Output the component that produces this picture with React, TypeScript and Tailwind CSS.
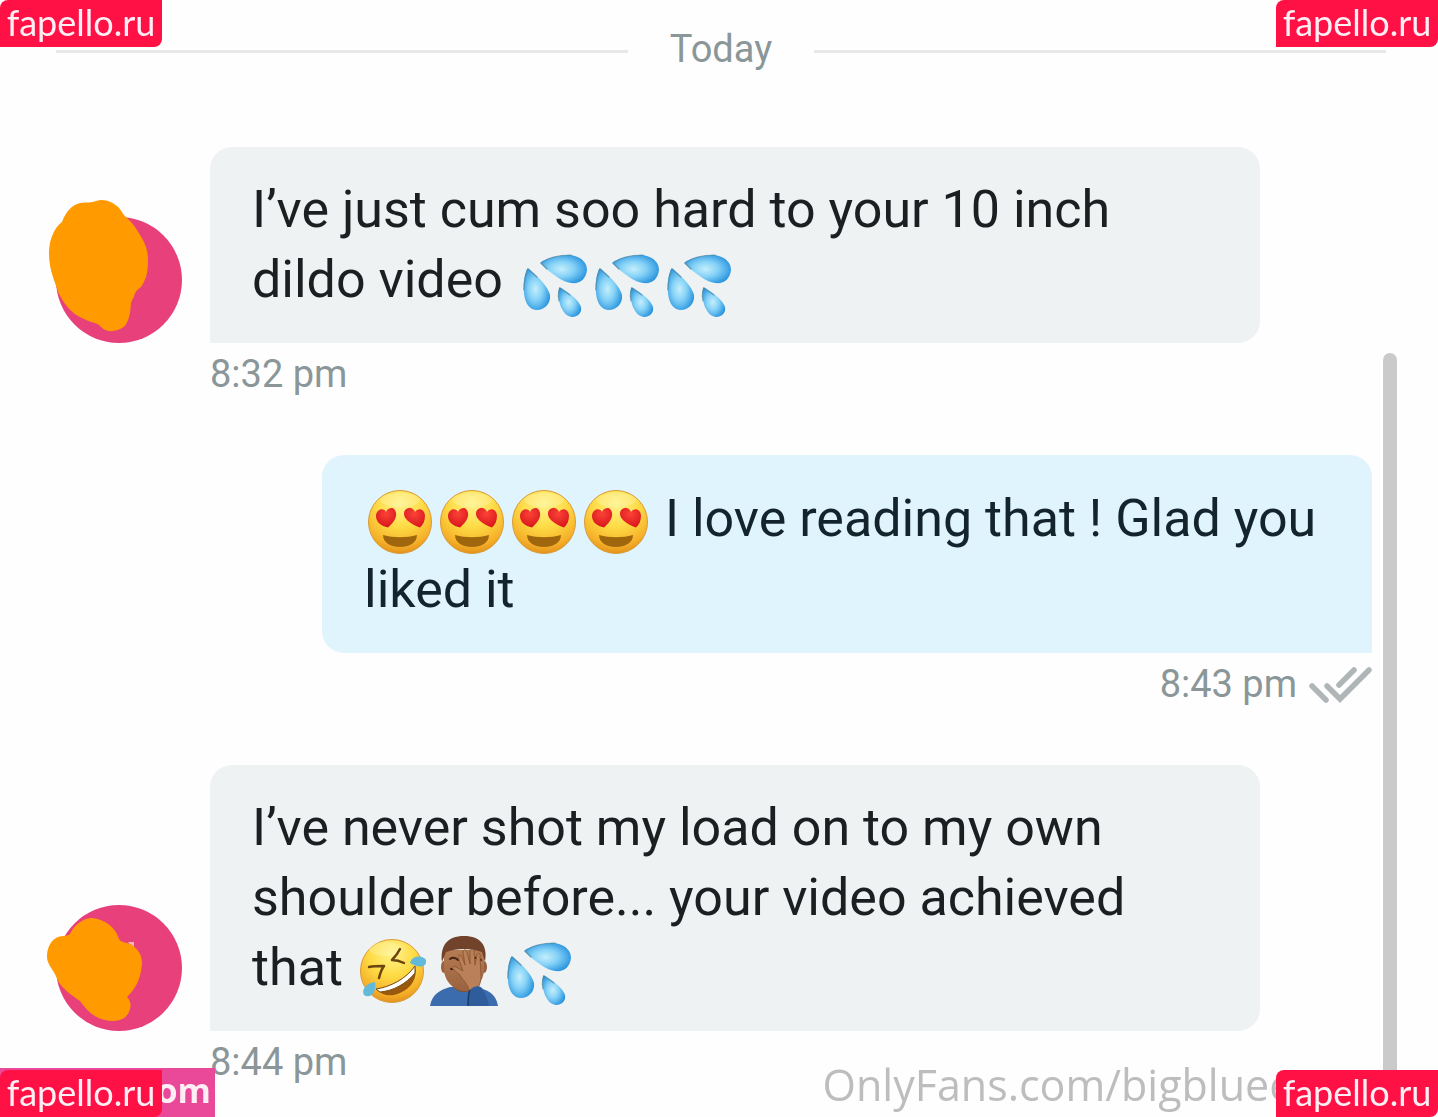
import type { ReactNode } from "react";

const emojiClass = "inline-block h-[66px] w-[72px] -my-2 align-middle overflow-visible";

function Gradients() {
  return (
    <svg className="absolute h-0 w-0" aria-hidden="true">
      <defs>
        <radialGradient id="face" cx="50%" cy="22%" r="80%">
          <stop offset="0" stopColor="#fff38c" />
          <stop offset="0.45" stopColor="#fedb45" />
          <stop offset="0.8" stopColor="#f6b22a" />
          <stop offset="1" stopColor="#e08e1a" />
        </radialGradient>
        <radialGradient id="drop" cx="45%" cy="50%" r="60%">
          <stop offset="0" stopColor="#c4eefc" />
          <stop offset="0.45" stopColor="#85d2f7" />
          <stop offset="1" stopColor="#2390dc" />
        </radialGradient>
        <radialGradient id="heart" cx="50%" cy="30%" r="70%">
          <stop offset="0" stopColor="#fb4338" />
          <stop offset="1" stopColor="#d8151c" />
        </radialGradient>
        <linearGradient id="skin" x1="0" y1="0" x2="0" y2="1">
          <stop offset="0" stopColor="#b57b52" />
          <stop offset="1" stopColor="#9a6240" />
        </linearGradient>
      </defs>
    </svg>
  );
}

function Sweat() {
  return (
    <svg viewBox="-4 -4 72 66" className={emojiClass} role="img" aria-label="sweat droplets">
      <g fill="url(#drop)">
        <path d="M21 8C29 3 42 1 51 1C62 3 67 9 67 16C66 25 60 30 51 29C42 28 31 19 21 10Q20 9 21 8Z" />
        <path d="M7 15C4 22 3 30 4 39C5 50 10 56 17 56C25 56 31 49 30 41C28 32 18 23 9 15Q8 14 7 15Z" />
        <path d="M39 34C38 41 39 50 42 55C45 61 49 63 53 63C59 62 62 58 61 53C59 46 49 39 41 34Q39 33 39 34Z" />
      </g>
      <g fill="none" stroke="#4f8baa" strokeWidth="1.2" strokeLinecap="round" opacity="0.8">
        <path d="M27 15L21 9C29 3 42 1 51 1" />
        <path d="M4 36C4 28 5 21 8 15L17 23" />
        <path d="M39 47C38 42 38 38 40 34L50 41" />
      </g>
    </svg>
  );
}

function HeartEyes() {
  return (
    <svg viewBox="0 0 72 66" className={emojiClass} role="img" aria-label="heart eyes">
      <circle cx="36" cy="33" r="31.500" fill="url(#face)" stroke="#d99a35" />
      <ellipse cx="36" cy="11" rx="20" ry="7" fill="#fff9bd" opacity="0.3" />
      <path d="M24 38.500C17 37 12 33 12 27C12 20 20 18 22 23C24 18 31 17 32 24C33 30 28 35 24 38.500Z" fill="url(#heart)" />
      <path d="M56 38.500C49 36 40 31 40 25C40 18 49 17 51 23C54 18 61 20 61 27C61 32 59 36 56 38.500Z" fill="url(#heart)" />
      <path d="M19 46C30 49 42 49 53 46C53 54 45 58 36 58C27 58 19 54 19 46Z" fill="#a0660e" />
    </svg>
  );
}

function Rofl() {
  return (
    <svg viewBox="0 0 72 66" className={emojiClass} role="img" aria-label="rolling on the floor laughing">
      <circle cx="36" cy="33" r="31.500" fill="url(#face)" stroke="#d99a35" />
      <ellipse cx="30" cy="11" rx="17" ry="7" fill="#fff9bd" opacity="0.3" />
      <g fill="none" stroke="#6b4410" strokeWidth="2.500" strokeLinecap="round" strokeLinejoin="round">
        <path d="M13 29C18 28 23 28 28 28C25 32 24 36 23 40" />
        <path d="M44 11C42 15 39 19 36 22C40 22 44 23 48 25" />
      </g>
      <path d="M20 51C34 49 50 41 59 28C62 39 56 50 44 55C35 59 26 58 20 51Z" fill="#9a580d" />
      <path d="M20 51C34 49 50 41 59 28L59 35C50 46 37 53 24 54Z" fill="#fff" stroke="#7b4b14" />
      <path d="M54 25C56 17 67 17 70 22C71 29 64 31 54 25Z" fill="#62b9d9" />
      <path d="M19 44C10 45 5 52 8 57C14 61 21 55 19 44Z" fill="#62b9d9" />
    </svg>
  );
}

function Facepalm() {
  return (
    <svg viewBox="0 0 72 66" className={emojiClass} role="img" aria-label="man facepalming">
      <path d="M2 68C4 56 12 52 22 49H46C60 51 68 56 70 68Z" fill="#3a6cae" />
      <path d="M25 42H46V50C40 56 30 55 25 49Z" fill="#82502f" />
      <ellipse cx="16" cy="29" rx="3" ry="6" fill="#986040" />
      <ellipse cx="56" cy="29" rx="3" ry="6" fill="#986040" />
      <path d="M16 12H56V31C56 44 46 53 37 53C26 53 16 43 16 31Z" fill="url(#skin)" />
      <path d="M14 24C12 8 19-2 36-2C53-2 60 8 57 24L54 14C43 10 29 10 18 14Z" fill="#70432a" />
      <path d="M22 21C25 19 28 20 30 22M46 20C49 19 51 20 53 22M23 31H29" stroke="#432312" strokeWidth="2" fill="none" strokeLinecap="round" />
      <path d="M31 22C30 17 32 15 34 19L37 27L35 14C35 11 38 11 39 14L42 26L42 13C43 10 46 11 46 14L47 27L49 17C50 14 53 15 52 19L53 38C53 43 52 46 50 50L41 54C41 46 34 42 32 37L25 31C23 29 26 28 28 29L35 33Z" fill="#b98059" stroke="#85532f" strokeWidth="0.8" />
      <path d="M40 68C40 61 40 56 42 52C45 48 51 47 54 50C58 56 60 62 61 68Z" fill="#2f5d9c" />
      <path d="M40 68C40 61 40 56 42 52" stroke="#183b69" strokeWidth="1.500" fill="none" />
    </svg>
  );
}

function Avatar({ children }: { children: ReactNode }) {
  return (
    <svg viewBox="0 0 126 126" className="h-[126px] w-[126px] shrink-0 overflow-visible" role="img" aria-label="Avatar">
      <circle cx="63" cy="63" r="63" fill="#e8407a" />
      {children}
    </svg>
  );
}

function DoubleCheck() {
  return (
    <svg viewBox="0 -2 63 38" className="h-[38px] w-[63px] overflow-visible" fill="none" stroke="#b0b6b8" strokeWidth="5.500" aria-hidden="true">
      <path d="M3 19L17 33M18 19L31 32L60 3" strokeLinecap="round" />
      <path d="M30 18L45 3" strokeLinecap="round" />
    </svg>
  );
}

function Received({ avatar, time, children }: { avatar: ReactNode; time: string; children: ReactNode }) {
  return (
    <article className="pl-14 pr-[178px]">
      <div className="flex items-end gap-7">
        {avatar}
        <p className="flex-1 rounded-[22px] rounded-bl-none bg-[#eff2f3] px-[42px] py-7 text-[#1b1f22]">{children}</p>
      </div>
      <time className="block pl-[154px] text-[38px] leading-[62px] text-[#8a9698]">{time}</time>
    </article>
  );
}

function Sent({ time, children }: { time: string; children: ReactNode }) {
  return (
    <article className="pl-[322px] pr-[66px]">
      <p className="rounded-[22px] rounded-br-none bg-[#e0f4fe] px-[42px] py-7 leading-[71px] text-[#14242c]">{children}</p>
      <div className="flex items-center justify-end gap-3 text-[38px] leading-[62px] text-[#8a9698]">
        <time>{time}</time>
        <DoubleCheck />
      </div>
    </article>
  );
}

function SiteBadge({ className }: { className: string }) {
  return (
    <span className={`fixed h-[47px] w-[162px] rounded-tl-lg rounded-br-lg bg-[#ff1045] text-center font-[Lato,sans-serif] text-[36px] leading-[44px] text-[#ffeef4] ${className}`}>
      fapello.ru
    </span>
  );
}

export default function App() {
  return (
    <div className="h-screen overflow-hidden bg-[#fefefe] font-[Roboto,sans-serif] text-[52px] leading-[70px]">
      <Gradients />
      <header className="flex items-center gap-[42px] pt-3.5 pr-[52px] pl-14">
        <span className="h-[3px] flex-1 bg-[#e8e8e8]" />
        <h1 className="pb-1 text-[38px] text-[#8a9698]">Today</h1>
        <span className="h-[3px] flex-1 bg-[#e8e8e8]" />
      </header>

      <main className="flex flex-col gap-[50px] pt-[59px]">
        <Received
          time="8:32 pm"
          avatar={
            <Avatar>
              <path
                d="M-7 36C-7 23-2 11 6 5C10-6 16-12 24-14C30-15 36-14 40-16C48-19 56-15 61-11C66-7 66-3 70 0C76 5 80 11 84 18C89 26 92 33 92 43C92 54 91 61 85 70C80 74 79 75 78 80C73 86 76 91 73 100C71 107 69 110 64 112C57 115 51 115 46 111C40 104 37 107 28 102C18 98 10 91 2 75C0 66-7 55-7 36Z"
                fill="#ff9a00"
              />
            </Avatar>
          }
        >
          I’ve just cum soo hard to your 10 inch dildo video <Sweat /><Sweat /><Sweat />
        </Received>

        <Sent time="8:43 pm">
          <HeartEyes /><HeartEyes /><HeartEyes /><HeartEyes /> I love reading that ! Glad you liked it
        </Sent>

        <Received
          time="8:44 pm"
          avatar={
            <Avatar>
              <path d="M72 37H78V44Z" fill="#f6b4c4" />
              <path
                d="M-9 52C-9 42-5 36 0 33C5 30 10 32 14 29C18 20 27 13 36 13C49 14 60 23 63 34C65 38 71 37 76 40C83 45 86 51 86 58C85 75 79 84 71 92C75 96 75 101 74 104C72 112 66 116 56 116C42 115 33 109 24 96C15 90 6 83 2 76C-1 66-9 60-9 52Z"
                fill="#ff9a00"
              />
            </Avatar>
          }
        >
          I’ve never shot my load on to my own shoulder before... your video achieved that <Rofl /><Facepalm /><Sweat />
        </Received>
      </main>

      <div className="fixed top-[353px] right-[41px] bottom-0 w-[14px] rounded-t-full bg-[#cacaca]" />
      <span className="fixed bottom-0 left-[57.200%] font-['Open_Sans',sans-serif] text-[43px] leading-[64px] text-[#bdbdbd]">
        OnlyFans.com/bigbluee
      </span>
      <span className="fixed bottom-0 left-0 h-[49px] w-[215px] bg-[#ea4899] pr-1 text-right font-['Open_Sans',sans-serif] text-[34px] leading-[44px] font-bold text-[#ffeef4]">
        om
      </span>
      <SiteBadge className="top-0 left-0" />
      <SiteBadge className="top-0 right-0" />
      <SiteBadge className="bottom-0 left-0" />
      <SiteBadge className="right-0 bottom-0" />
    </div>
  );
}
